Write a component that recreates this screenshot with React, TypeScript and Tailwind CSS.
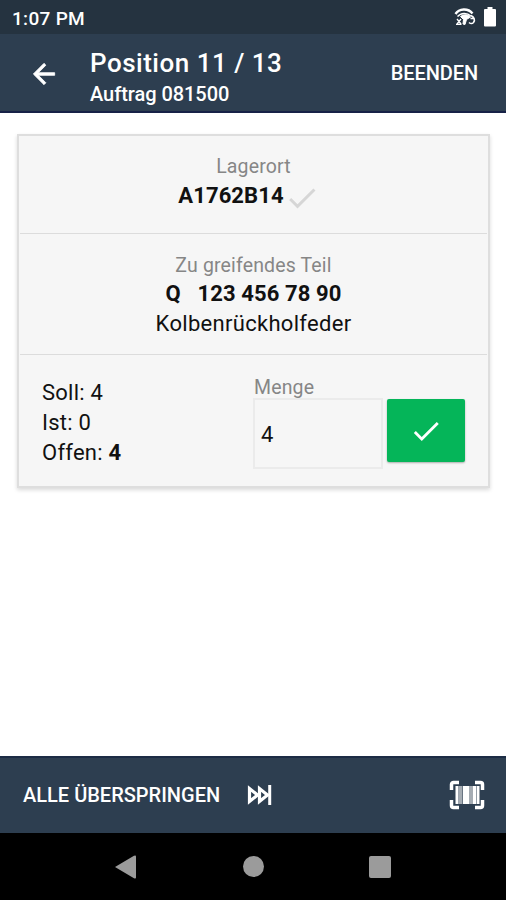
import type { ReactNode } from 'react';

const FONT = "font-['Roboto','Noto_Sans',sans-serif]";

function StatusBar() {
  return (
    <div className="flex h-[34px] shrink-0 items-center justify-between bg-[#253340] pl-3 pr-[10px] text-white">
      <span className="mt-[3px] text-[19px] font-medium leading-[34px] tracking-[0.3px]">1:07 PM</span>
      <div className="flex items-center gap-[8px]">
        <svg width="22" height="20" viewBox="0 0 22 20" fill="none" stroke="#fff">
          <path d="M1.500 7C5 1.500 14 .8 18.500 6.500" strokeWidth="2.400" />
          <path d="M3.500 9.500C7 5.500 13 5.500 17 9" strokeWidth="1.400" />
          <path d="M6.500 9.500c3-2.500 8-2 10 .5l-4 2.500-1.500 5-2-.5.5-4.500z" fill="#fff" strokeWidth="1" />
          <path d="M3 12l4 5M7 12l-4 5M2 17.300h5.500" strokeWidth="1.300" />
          <path d="M17 8.500c3 1.500 4.500 4.500 2.500 7-1.500 1.500-3.500 1-4.500 0M16.500 11.500h3" strokeWidth="1.600" />
        </svg>
        <svg width="12" height="20" viewBox="0 0 12 20" fill="#fff">
          <path d="M3.500 0h5v2H11a1 1 0 0 1 1 1v15.500a1 1 0 0 1-1 1H1a1 1 0 0 1-1-1V3a1 1 0 0 1 1-1h2.500z" />
        </svg>
      </div>
    </div>
  );
}

function AppBar() {
  return (
    <header className="flex h-[79px] shrink-0 items-center border-b-2 border-[#172247] bg-[#2d3e50] pl-[28px] pr-[28px] text-white">
      <button type="button" className="mt-[3px]">
        <svg width="32" height="32" viewBox="0 0 24 24" fill="#fff" stroke="#fff" strokeWidth=".6">
          <path d="M20 11H7.830l5.590-5.590L12 4l-8 8 8 8 1.410-1.410L7.830 13H20v-2z" />
        </svg>
      </button>
      <div className="ml-[30px] flex-1 whitespace-nowrap pt-[10px]">
        <h1 className="text-[26px] font-medium leading-[32px] tracking-[0.5px]">Position 11 / 13</h1>
        <p className="text-[20px] font-medium leading-[30px] tracking-[-0.05px]">Auftrag 081500</p>
      </div>
      <button type="button" className="text-[20px] font-medium leading-[30px] tracking-[-0.1px]">
        BEENDEN
      </button>
    </header>
  );
}

function Label({ children }: { children: ReactNode }) {
  return <div className="text-[19.5px] leading-[29px] tracking-[0.15px] text-[#868686]">{children}</div>;
}

function PickCard() {
  return (
    <section className="ml-[17px] mr-4 mt-[21px] flex h-[354px] flex-col border-2 border-[#dedede] bg-[#f6f6f6] text-[22px] leading-[30px] text-[#111] shadow-[0_2px_4px_rgba(0,0,0,0.15)]">
      {/* Lagerort */}
      <div className="mx-px flex h-[98px] flex-col items-center border-b border-[#dcdcdc] pt-4">
        <Label>Lagerort</Label>
        <div className="flex h-[28px] items-center pr-[9px]">
          <span className="mt-px font-bold tracking-[0.1px]">A1762B14</span>
          <svg className="mt-[6px]" width="36" height="36" viewBox="0 0 24 24" fill="#d6d6d6">
            <path d="M9 16.170L4.830 12l-1.420 1.410L9 19 21 7l-1.410-1.410z" />
          </svg>
        </div>
      </div>

      {/* Teil */}
      <div className="mx-px flex h-[121px] flex-col items-center border-b border-[#dcdcdc] pt-[17px]">
        <Label>Zu greifendes Teil</Label>
        <div className="-mt-px whitespace-pre font-bold tracking-[0.100px]">Q   123 456 78 90</div>
        <div className="tracking-[0.300px]">Kolbenrückholfeder</div>
      </div>

      {/* Mengen */}
      <div className="flex flex-1 pl-[23px]">
        <div className="w-[211px] pt-[23px] tracking-[0.250px]">
          <div>Soll: 4</div>
          <div>Ist: 0</div>
          <div>
            Offen: <b>4</b>
          </div>
        </div>
        <div className="pt-[18px]">
          <div className="-mb-[4px] pl-px">
            <Label>Menge</Label>
          </div>
          <div className="flex items-start gap-[4px]">
            <div className="flex h-[71px] w-[130px] items-center border-2 border-[#ebebeb] pl-[6px] pt-[2px]">4</div>
            <button
              type="button"
              className="mt-[1px] flex h-[63px] w-[78px] items-center justify-center rounded-[2px] bg-[#05b559] shadow-[0_1px_2px_rgba(0,0,0,0.3)]"
            >
              <svg width="34" height="34" viewBox="0 0 24 24" fill="#fff">
                <path d="M9 16.170L4.830 12l-1.420 1.410L9 19 21 7l-1.410-1.410z" />
              </svg>
            </button>
          </div>
        </div>
      </div>
    </section>
  );
}

function ActionBar() {
  return (
    <footer className="flex h-[77px] shrink-0 items-center border-t-2 border-[#1c2c45] bg-[#2d3e50] pb-[2px] pl-[23px] pr-[21px] text-white">
      <span className="text-[20px] font-medium leading-[30px]">ALLE ÜBERSPRINGEN</span>
      <svg className="ml-[27px]" width="26" height="22" viewBox="0 0 26 22" fill="none" stroke="#fff">
        <path d="M2.500 4.500v13l8-6.500z" strokeWidth="3.200" />
        <path d="M12.500 4.500v13l8-6.500z" strokeWidth="3.200" />
        <path d="M22.700 1v20" strokeWidth="3" />
      </svg>
      <svg className="ml-auto" width="36" height="30" viewBox="0 0 36 30" fill="none" stroke="#fff">
        <path
          d="M2.500 10V4.500a2 2 0 0 1 2-2H10M26 2.500h5.500a2 2 0 0 1 2 2V10M33.500 20v5.500a2 2 0 0 1-2 2H26M10 27.500H4.500a2 2 0 0 1-2-2V20"
          strokeWidth="3.500"
        />
        <path d="M8 6v18M15.500 6v18M29 6v18" strokeWidth="3" />
        <path d="M18.500 6v18M25.500 6v18" strokeWidth="3" />
        <path d="M11.500 6v18M22 6v18" stroke="#a5acb3" strokeWidth="4" />
      </svg>
    </footer>
  );
}

function NavBar() {
  return (
    <nav className="flex h-[67px] shrink-0 items-center bg-black pl-[115px]">
      <svg width="21" height="24" viewBox="0 0 21 24" fill="#9b9b9b">
        <path d="M0 12L19 .8Q21 0 21 1.500v21q0 1.500-2 .7z" />
      </svg>
      <div className="ml-[107px] size-[21px] rounded-full bg-[#9b9b9b]" />
      <div className="ml-[105px] size-[22px] rounded-[2px] bg-[#9b9b9b]" />
    </nav>
  );
}

export default function App() {
  return (
    <div className={`flex h-[900px] w-[506px] flex-col overflow-hidden bg-white ${FONT}`}>
      <StatusBar />
      <AppBar />
      <main className="flex-1">
        <PickCard />
      </main>
      <ActionBar />
      <NavBar />
    </div>
  );
}
